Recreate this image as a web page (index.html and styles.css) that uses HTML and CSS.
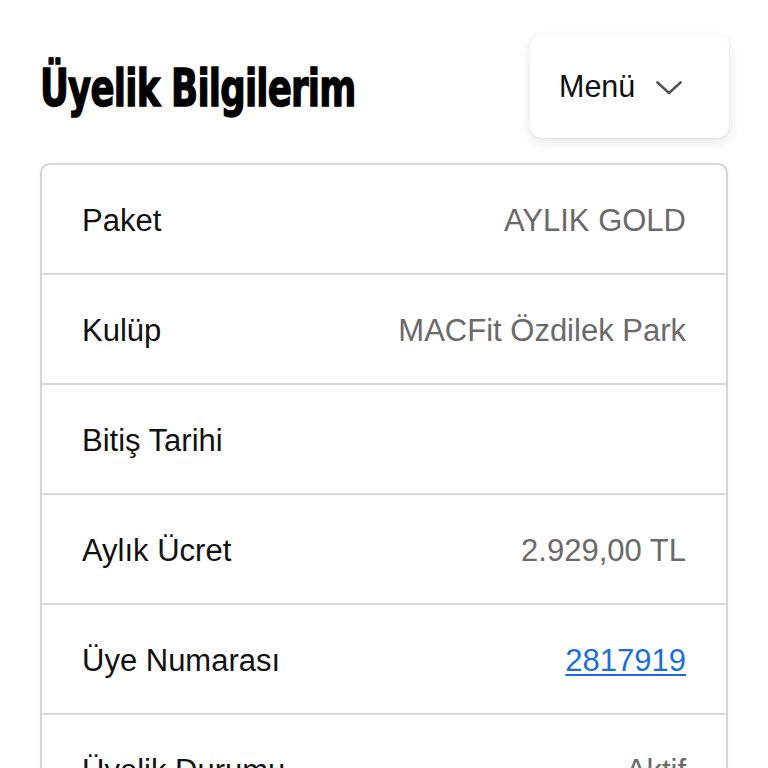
FILE: index.html
```html
<!DOCTYPE html>
<html lang="tr">
<head>
<meta charset="utf-8">
<title>Üyelik Bilgilerim</title>
<link rel="stylesheet" href="styles.css">
</head>
<body>
<div class="page">
  <header class="header">
    <h1 class="title">Üyelik Bilgilerim</h1>
    <button class="menu-btn" type="button">
      <span>Menü</span>
      <svg class="chev" width="26" height="14" viewBox="0 0 26 14" aria-hidden="true"><path d="M1.5 1.5 L13 12 L24.5 1.5" fill="none" stroke="#555" stroke-width="2.6" stroke-linecap="round" stroke-linejoin="round"/></svg>
    </button>
  </header>
  <section class="card">
    <div class="row"><span class="label">Paket</span><span class="value">AYLIK GOLD</span></div>
    <div class="row"><span class="label">Kulüp</span><span class="value">MACFit Özdilek Park</span></div>
    <div class="row"><span class="label">Bitiş Tarihi</span><span class="value"></span></div>
    <div class="row"><span class="label">Aylık Ücret</span><span class="value">2.929,00 TL</span></div>
    <div class="row"><span class="label">Üye Numarası</span><a class="value link" href="#">2817919</a></div>
    <div class="row"><span class="label">Üyelik Durumu</span><span class="value">Aktif</span></div>
  </section>
</div>
</body>
</html>
```

FILE: styles.css
```css
html, body {
  margin: 0;
  padding: 0;
  background: #ffffff;
}
body {
  font-family: "Liberation Sans", Arial, sans-serif;
  color: #111;
}
.page {
  padding: 35px 39px 0 40px;
}
.header {
  display: flex;
  justify-content: space-between;
  align-items: center;
  height: 103px;
}
.title {
  margin: 0;
  font-family: "DejaVu Sans Condensed", "DejaVu Sans", sans-serif;
  font-stretch: condensed;
  font-weight: 700;
  font-size: 51px;
  line-height: 1;
  color: #000;
  letter-spacing: -1px;
  -webkit-text-stroke: 1.3px #000;
  transform-origin: left center;
  transform: scaleX(0.775);
  white-space: nowrap;
  margin-top: 4px;
}
.menu-btn {
  width: 199px;
  height: 103px;
  border: none;
  background: #fff;
  border-radius: 12px;
  box-shadow: 0 4px 14px rgba(0,0,0,0.10), 0 1px 3px rgba(0,0,0,0.05);
  display: flex;
  align-items: center;
  gap: 21px;
  padding: 0 0 0 29px;
  font-family: "Liberation Sans", Arial, sans-serif;
  font-size: 30.5px;
  color: #111;
}
.chev {
  margin-top: 2px;
}
.card {
  margin-top: 25px;
  border: 2px solid #d6d6d6;
  border-radius: 10px;
  background: #fff;
  box-shadow: 0 1px 6px rgba(0,0,0,0.06);
  margin-right: 1px;
}
.row {
  display: flex;
  justify-content: space-between;
  align-items: center;
  box-sizing: border-box;
  height: 108px;
  padding: 3px 40px 0 40px;
  font-size: 31px;
}
.row + .row {
  box-sizing: content-box;
  height: 105px;
  border-top: 2px solid #d9d9d9;
}
.label {
  color: #111;
}
.value {
  color: #6a6a6a;
}
.link {
  color: #1a6fe0;
  text-decoration: underline;
  text-decoration-thickness: 2px;
  text-underline-offset: 3px;
}
```
